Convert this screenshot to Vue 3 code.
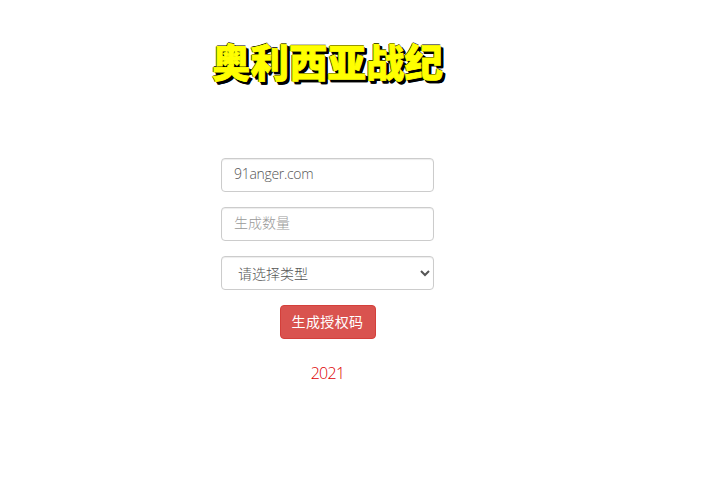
<template>
  <div class="page">
    <h1 class="title">奥利西亚战纪</h1>
    <form class="form" @submit.prevent>
      <input class="field" type="text" v-model="domain" />
      <input class="field" type="text" placeholder="生成数量" />
      <select class="field" v-model="kind">
        <option value="">请选择类型</option>
        <option value="month">月卡</option>
        <option value="year">年卡</option>
      </select>
      <button class="submit" type="submit">生成授权码</button>
    </form>
    <p class="year">2021</p>
  </div>
</template>

<script setup>
import { ref } from 'vue';

const domain = ref('91anger.com');
const kind = ref('');
</script>

<style>
html,
body {
  background: #fff;
}
</style>

<style scoped>
.page {
  width: 726px;
  height: 482px;
  box-sizing: border-box;
  padding: 35px 0 0 221px;
  font-family: "Open Sans", "Noto Sans CJK SC", sans-serif;
  overflow: hidden;
}
.title {
  width: 240px;
  height: 50px;
  margin: 0 0 73px -9px;
  font-family: "Noto Sans CJK SC", sans-serif;
  font-size: 38.5px;
  line-height: 50px;
  font-weight: 900;
  white-space: nowrap;
  color: #ffff00;
  -webkit-text-stroke: 0.8px #ffff00;
  text-shadow: -1px 0 0 #000, 0 -1px 0 #000, 1px 1px 0 #000, 2px 2px 0 #000, 3px 3px 0 #000, 3px 2px 0 #000, 2px 3px 0 #000;
}
.form {
  width: 213px;
  display: flex;
  flex-direction: column;
  align-items: center;
  gap: 15px;
}
.field {
  width: 100%;
  height: 34px;
  box-sizing: border-box;
  padding: 4px 12px 8px;
  font-family: inherit;
  font-size: 14px;
  font-weight: 300;
  letter-spacing: -0.3px;
  color: #555;
  background: #fff;
  border: 1px solid #ccc;
  border-radius: 4px;
  box-shadow: inset 0 1px 1px rgba(0, 0, 0, 0.075);
  outline: none;
}
select.field {
  padding: 6px 12px;
  letter-spacing: 0;
}
.field::placeholder {
  color: #999;
  letter-spacing: 0;
}
.submit {
  width: 96px;
  height: 34px;
  padding: 0 0 2px;
  font-family: inherit;
  font-size: 14px;
  letter-spacing: 0.4px;
  color: #fff;
  background: #d9534f;
  border: 1px solid #d43f3a;
  border-radius: 4px;
}
.year {
  width: 213px;
  margin: 23px 0 0;
  text-align: center;
  font-size: 16px;
  letter-spacing: -0.7px;
  line-height: 22px;
  font-weight: 300;
  color: #d00;
}
</style>
